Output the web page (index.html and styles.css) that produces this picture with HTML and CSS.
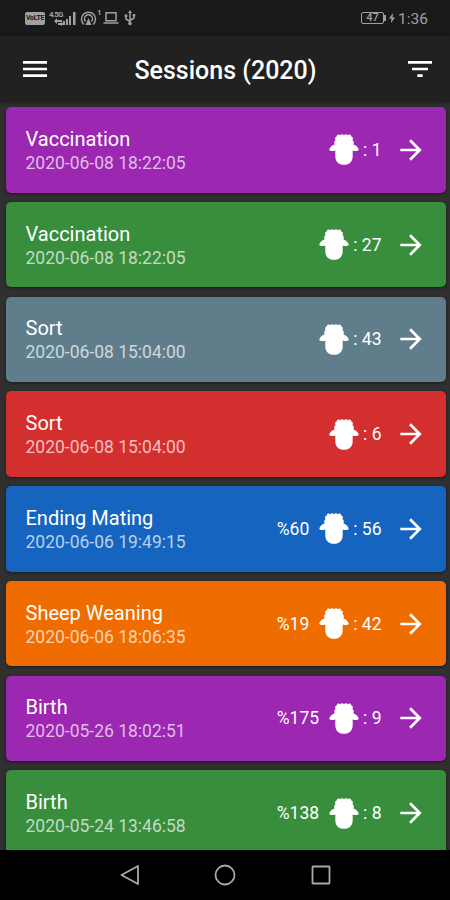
FILE: index.html
```html
<!DOCTYPE html>
<html lang="en">

<head>
    <meta charset="UTF-8">
    <meta name="viewport" content="width=device-width, initial-scale=1.0">
    <title>Sessions (2020)</title>
    <link rel="stylesheet" href="styles.css">
</head>

<body>
    <!-- shared icons -->
    <svg class="sprite">
        <symbol id="sheep" viewBox="0 0 30 31">
            <path d="M6.500 6C5.500 4 6.500 2.500 7.800 2.500C7.800 .5 10 0 11.200 1.300C12 0 14 0 15 1.300C16 0 18 0 18.800 1.300C20 0 22.200 .5 22.200 2.500C23.500 2.500 24.500 4 23.500 6C25 7 25 9 24.500 10.500C27 11.500 29.200 13 29.800 16C28.500 17.300 26 17.300 23.700 16.500V22C23.700 27.500 20.500 30.800 15 30.800S6.300 27.500 6.300 22V16.500C4 17.300 1.500 17.300 .2 16C.8 13 3 11.500 5.500 10.500C5 9 5 7 6.500 6z" />
        </symbol>
        <symbol id="arrow" viewBox="0 0 24 24">
            <path d="M12 4l-1.410 1.410L16.170 11H4v2h12.170l-5.580 5.590L12 20l8-8z" />
        </symbol>
    </svg>

    <div class="phone">
        <div class="status-bar">
            <div class="status-left">
                <span class="volte">VoLTE</span>
                <svg class="signal" width="28" height="18" viewBox="0 0 28 18">
                    <text x="0" y="8">4.5G</text>
                    <path d="M5 12l3-3v2h5v2H8v2zM9 14h3v-1l3 2-3 2v-1H9z" />
                    <path d="M14 12h2v4h-2zM17 10h2v6h-2zM20 7h2v9h-2zM24 3h2.500v13H24z" />
                </svg>
                <svg class="hotspot" width="22" height="20" viewBox="0 0 22 20">
                    <path d="M4 16.500a7 7 0 1 1 9 0M5.500 13.500a4 4 0 1 1 6 0" />
                    <path class="solid" d="M8.500 10l3 7h-6z" />
                    <text x="17" y="7">1</text>
                </svg>
                <svg class="laptop" width="16" height="14" viewBox="0 0 16 14">
                    <path d="M3 1.700h10v8H3zM.5 12h15" />
                </svg>
                <svg class="usb" width="12" height="16" viewBox="0 0 12 16">
                    <path d="M6 2v11M2 6v3l4 2.500M10 5v3L6 10.500" />
                    <path class="solid" d="M6 0l2 3H4zM.700 4.500h2.600v2.500H.700zM8.700 4h2.600v2.500H8.700z" />
                    <circle class="solid" cx="6" cy="13.500" r="1.800" />
                </svg>
            </div>
            <div class="status-right">
                <span class="battery">47</span>
                <svg class="bolt" width="6" height="10" viewBox="0 0 6 10">
                    <path d="M4 0L0 5.500h2.500L2 10l4-5.500H3.500z" />
                </svg>
                <span class="clock">1:36</span>
            </div>
        </div>

        <header class="app-bar">
            <svg class="bar-icon" viewBox="0 0 24 24">
                <path d="M3 18h18v-2H3v2zm0-5h18v-2H3v2zm0-7v2h18V6H3z" />
            </svg>
            <h1>Sessions (2020)</h1>
            <svg class="bar-icon" viewBox="0 0 24 24">
                <path d="M10 18h4v-2h-4v2zM3 6v2h18V6H3zm3 7h12v-2H6v2z" />
            </svg>
        </header>

        <main class="sessions">
            <div class="card purple">
                <div class="info">
                    <h2>Vaccination</h2>
                    <p>2020-06-08 18:22:05</p>
                </div>
                <svg class="sheep"><use href="#sheep" /></svg>
                <span class="count">: 1</span>
                <svg class="arrow"><use href="#arrow" /></svg>
            </div>
            <div class="card green">
                <div class="info">
                    <h2>Vaccination</h2>
                    <p>2020-06-08 18:22:05</p>
                </div>
                <svg class="sheep"><use href="#sheep" /></svg>
                <span class="count">: 27</span>
                <svg class="arrow"><use href="#arrow" /></svg>
            </div>
            <div class="card grey">
                <div class="info">
                    <h2>Sort</h2>
                    <p>2020-06-08 15:04:00</p>
                </div>
                <svg class="sheep"><use href="#sheep" /></svg>
                <span class="count">: 43</span>
                <svg class="arrow"><use href="#arrow" /></svg>
            </div>
            <div class="card red">
                <div class="info">
                    <h2>Sort</h2>
                    <p>2020-06-08 15:04:00</p>
                </div>
                <svg class="sheep"><use href="#sheep" /></svg>
                <span class="count">: 6</span>
                <svg class="arrow"><use href="#arrow" /></svg>
            </div>
            <div class="card blue">
                <div class="info">
                    <h2>Ending Mating</h2>
                    <p>2020-06-06 19:49:15</p>
                </div>
                <span class="percent">%60</span>
                <svg class="sheep"><use href="#sheep" /></svg>
                <span class="count">: 56</span>
                <svg class="arrow"><use href="#arrow" /></svg>
            </div>
            <div class="card orange">
                <div class="info">
                    <h2>Sheep Weaning</h2>
                    <p>2020-06-06 18:06:35</p>
                </div>
                <span class="percent">%19</span>
                <svg class="sheep"><use href="#sheep" /></svg>
                <span class="count">: 42</span>
                <svg class="arrow"><use href="#arrow" /></svg>
            </div>
            <div class="card purple">
                <div class="info">
                    <h2>Birth</h2>
                    <p>2020-05-26 18:02:51</p>
                </div>
                <span class="percent">%175</span>
                <svg class="sheep"><use href="#sheep" /></svg>
                <span class="count">: 9</span>
                <svg class="arrow"><use href="#arrow" /></svg>
            </div>
            <div class="card green">
                <div class="info">
                    <h2>Birth</h2>
                    <p>2020-05-24 13:46:58</p>
                </div>
                <span class="percent">%138</span>
                <svg class="sheep"><use href="#sheep" /></svg>
                <span class="count">: 8</span>
                <svg class="arrow"><use href="#arrow" /></svg>
            </div>
        </main>

        <nav class="nav-bar">
            <svg viewBox="0 0 24 24">
                <path d="M20 3v18L3.500 12z" />
            </svg>
            <svg viewBox="0 0 24 24">
                <circle cx="12" cy="12" r="9.500" />
            </svg>
            <svg viewBox="0 0 24 24">
                <rect x="3.500" y="3.500" width="17" height="17" rx="0.500" />
            </svg>
        </nav>
    </div>
</body>

</html>
```

FILE: styles.css
```css
* {
    margin: 0;
    padding: 0;
    box-sizing: border-box;
}

body {
    font-family: Roboto, sans-serif;
    background-color: #303030;
    color: white;
}

.sprite {
    display: none;
}

.phone {
    width: 450px;
    height: 900px;
    display: flex;
    flex-direction: column;
    overflow: hidden;
}

/* status bar */
.status-bar {
    height: 36px;
    flex-shrink: 0;
    padding: 0 22px 0 25px;
    display: flex;
    align-items: center;
    justify-content: space-between;
    background-color: #1a1a1a;
    color: #a0a0a0;
}

.status-left,
.status-right {
    display: flex;
    align-items: center;
}

.status-bar svg {
    fill: #a0a0a0;
}

.status-bar svg text {
    font-size: 8px;
    font-weight: 700;
}

.volte {
    width: 20px;
    height: 13px;
    margin-right: 4px;
    border-radius: 2px;
    background-color: #a0a0a0;
    color: #1a1a1a;
    font-size: 7px;
    font-weight: 700;
    line-height: 13px;
    text-align: center;
    letter-spacing: -0.3px;
}

.signal {
    margin-right: 3px;
}

.signal text {
    letter-spacing: -0.8px;
}

.status-bar .hotspot,
.status-bar .laptop,
.status-bar .usb {
    fill: none;
    stroke: #a0a0a0;
    stroke-width: 1.5;
}

.status-bar .hotspot text,
.status-bar .solid {
    fill: #a0a0a0;
    stroke: none;
}

.laptop {
    margin: 0 5px 0 1px;
}

.battery {
    position: relative;
    width: 23px;
    height: 12px;
    border: 1px solid #a0a0a0;
    border-radius: 2px;
    font-size: 11px;
    font-weight: 500;
    line-height: 10px;
    text-align: center;
}

.battery::after {
    content: "";
    position: absolute;
    right: -3px;
    top: 2px;
    width: 2px;
    height: 6px;
    background-color: #a0a0a0;
}

.bolt {
    margin: 0 3px 0 5px;
}

.clock {
    font-size: 15.5px;
    line-height: 18px;
    padding-top: 1px;
}

/* app bar */
.app-bar {
    height: 66px;
    flex-shrink: 0;
    padding: 0 14px 0 19px;
    display: flex;
    align-items: center;
    justify-content: space-between;
    background-color: #212121;
    box-shadow: 0 1px 4px rgba(0, 0, 0, 0.4);
}

.app-bar h1 {
    padding: 2px 4px 0 0;
    font-size: 25px;
    font-weight: 500;
}

.bar-icon {
    width: 32px;
    height: 32px;
    fill: white;
}

/* list */
.sessions {
    flex: 1;
    min-height: 0;
    overflow: hidden;
    padding: 5px 4.500px 0 6px;
    display: flex;
    flex-direction: column;
    gap: 9.250px;
}

.card {
    height: 85.500px;
    flex-shrink: 0;
    padding: 0 19px 0 19.500px;
    display: flex;
    align-items: center;
    border-radius: 5px;
    box-shadow: 0 1px 3px rgba(0, 0, 0, 0.5);
}

.info {
    flex: 1;
    padding-top: 2px;
}

.info h2 {
    font-size: 20px;
    font-weight: 400;
    line-height: 24px;
}

.info p {
    font-size: 17.500px;
    line-height: 24px;
    color: rgba(255, 255, 255, 0.7);
}

.percent,
.count {
    font-size: 17.500px;
}

.percent {
    margin-right: 10px;
}

.sheep {
    width: 30px;
    height: 31px;
    margin-right: 4px;
    fill: white;
}

.arrow {
    width: 32px;
    height: 32px;
    margin-left: 13px;
    fill: white;
}

.purple {
    background-color: #9c27b0;
}

.green {
    background-color: #388e3c;
}

.grey {
    background-color: #607d8b;
}

.red {
    background-color: #d32f2f;
}

.blue {
    background-color: #1565c0;
}

.orange {
    background-color: #ef6c00;
}

/* android buttons */
.nav-bar {
    height: 50px;
    flex-shrink: 0;
    display: flex;
    align-items: center;
    justify-content: center;
    gap: 71.500px;
    background-color: black;
}

.nav-bar svg {
    width: 24px;
    height: 24px;
    fill: none;
    stroke: #a8a8a8;
    stroke-width: 1.8;
    stroke-linejoin: round;
}
```
